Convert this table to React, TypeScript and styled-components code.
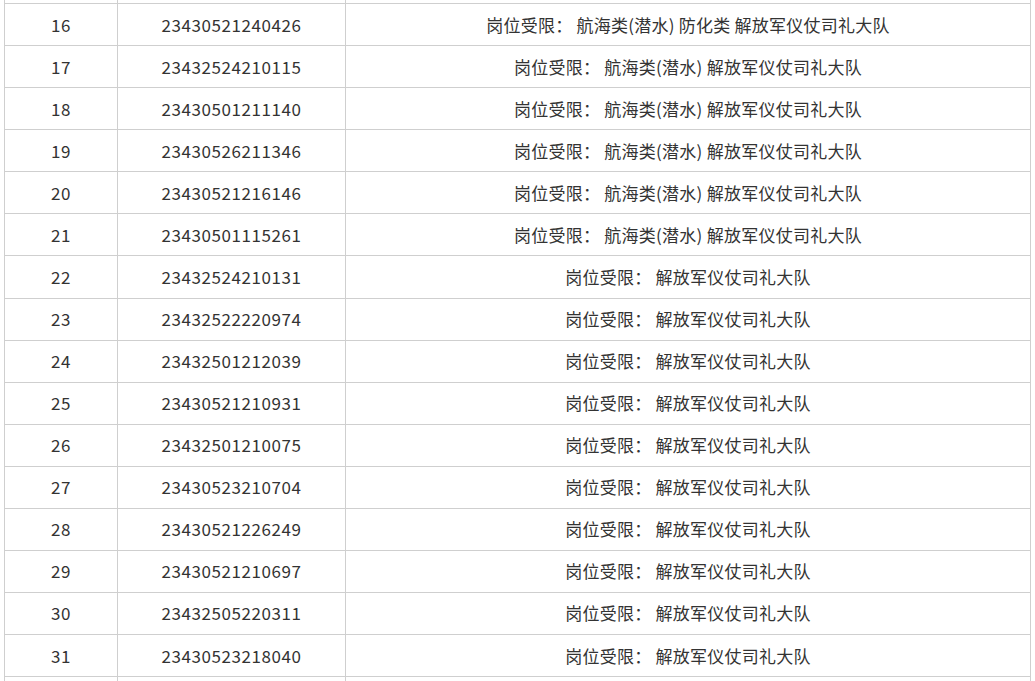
import React from "react";
import styled, { createGlobalStyle } from "styled-components";

const GlobalStyle = createGlobalStyle`
  html, body { margin: 0; padding: 0; background: #fff; }
  body { overflow: hidden; }
`;

const Page = styled.div`
  padding-left: 4px;
  width: 1026px;
`;

const Table = styled.table`
  border-collapse: collapse;
  table-layout: fixed;
  width: 1026px;
  margin-top: -39px;
  font-family: "Noto Sans CJK SC", "Noto Sans", sans-serif;
  font-size: 17px;
  color: #333;
`;

const Row = styled.tr`
  height: 42.0625px;
`;

const Cell = styled.td<{ $spacing?: number }>`
  border: 1px solid #cfcfcf;
  padding: 0;
  text-align: center;
  vertical-align: middle;
  white-space: nowrap;
  line-height: 20px;
  letter-spacing: ${(p) => p.$spacing ?? 0}px;
`;

type Item = { no: number; id: string; note: string };

const FULL = "岗位受限： 航海类(潜水) 解放军仪仗司礼大队";
const SHORT = "岗位受限： 解放军仪仗司礼大队";

const rows: Item[] = [
  { no: 15, id: "", note: "" },
  { no: 16, id: "23430521240426", note: "岗位受限： 航海类(潜水) 防化类 解放军仪仗司礼大队" },
  { no: 17, id: "23432524210115", note: FULL },
  { no: 18, id: "23430501211140", note: FULL },
  { no: 19, id: "23430526211346", note: FULL },
  { no: 20, id: "23430521216146", note: FULL },
  { no: 21, id: "23430501115261", note: FULL },
  { no: 22, id: "23432524210131", note: SHORT },
  { no: 23, id: "23432522220974", note: SHORT },
  { no: 24, id: "23432501212039", note: SHORT },
  { no: 25, id: "23430521210931", note: SHORT },
  { no: 26, id: "23432501210075", note: SHORT },
  { no: 27, id: "23430523210704", note: SHORT },
  { no: 28, id: "23430521226249", note: SHORT },
  { no: 29, id: "23430521210697", note: SHORT },
  { no: 30, id: "23432505220311", note: SHORT },
  { no: 31, id: "23430523218040", note: SHORT },
  { no: 32, id: "", note: "" },
];

export default function App() {
  return (
    <>
      <GlobalStyle />
      <Page>
        <Table>
          <colgroup>
            <col style={{ width: 113 }} />
            <col style={{ width: 228 }} />
            <col style={{ width: 685 }} />
          </colgroup>
          <tbody>
            {rows.map((r) => (
              <Row key={r.no}>
                <Cell $spacing={0.5}>{r.id || r.note ? r.no : ""}</Cell>
                <Cell $spacing={0.58}>{r.id}</Cell>
                <Cell $spacing={0.25}>{r.note}</Cell>
              </Row>
            ))}
          </tbody>
        </Table>
      </Page>
    </>
  );
}
